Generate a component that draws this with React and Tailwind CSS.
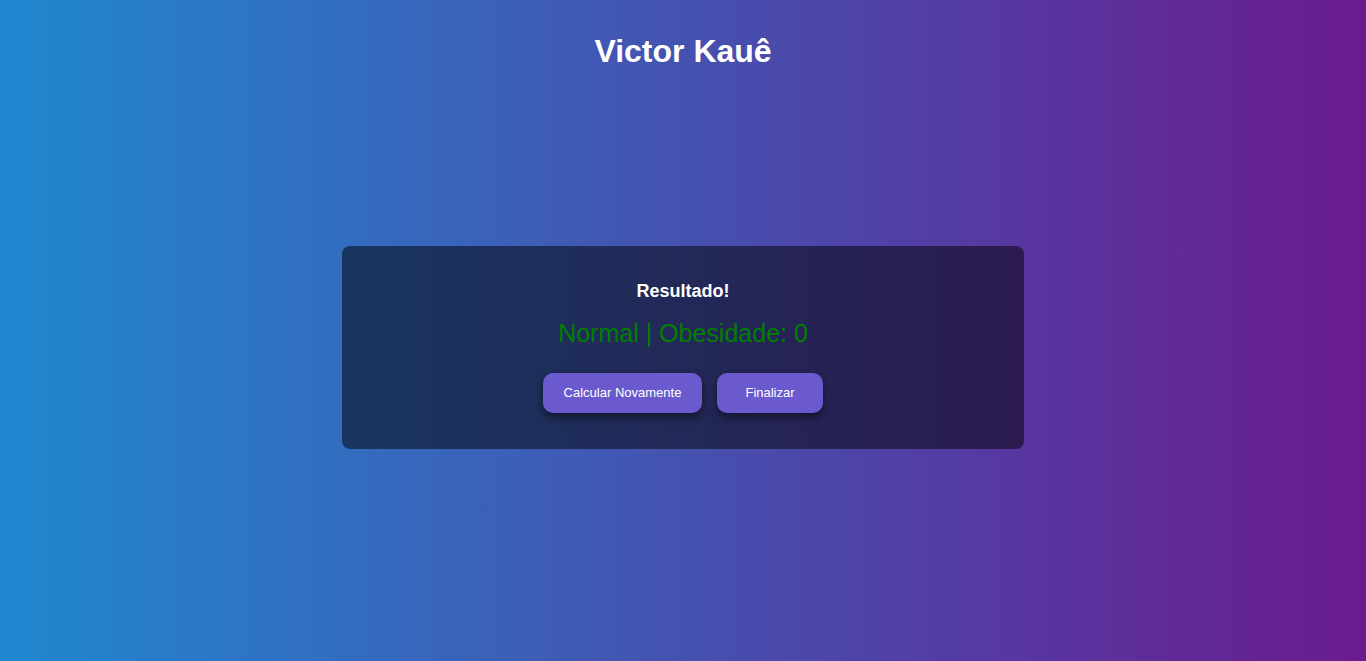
import React from "react";

// Tela de resultado do cálculo de IMC
export default function App() {
    return (
        <div
            className="min-h-screen w-full flex flex-col items-center bg-[linear-gradient(to_right,#2088d0,#6a1b8f)] text-white"
            style={{ fontFamily: '"Liberation Sans", Arial, sans-serif' }}
        >
            <h1 className="mt-[33px] text-[32px] leading-[37px] font-bold text-white">
                Victor Kauê
            </h1>

            {/* Card de resultado */}
            <div className="mt-[176px] w-[682px] h-[203px] rounded-lg bg-black/50 flex flex-col items-center pt-[35px]">
                <h2 className="text-[18px] leading-[21px] font-bold">Resultado!</h2>
                <p className="mt-[17px] text-[25px] leading-[28px] text-[#008000]">
                    Normal | Obesidade: 0
                </p>

                <div className="mt-[26px] flex gap-[15px]">
                    <button className="w-[159px] h-10 rounded-[10px] bg-[#6a5acd] text-[13px] text-white shadow-[0_4px_8px_rgba(0,0,0,0.5)]">
                        Calcular Novamente
                    </button>
                    <button className="w-[106px] h-10 rounded-[10px] bg-[#6a5acd] text-[13px] text-white shadow-[0_4px_8px_rgba(0,0,0,0.5)]">
                        Finalizar
                    </button>
                </div>
            </div>
        </div>
    );
}
